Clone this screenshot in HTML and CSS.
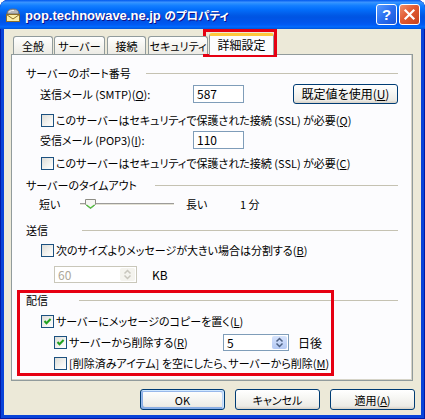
FILE: index.html
```html
<!DOCTYPE html>
<html lang="ja">
<head>
<meta charset="utf-8">
<title>pop.technowave.ne.jp のプロパティ</title>
<link rel="stylesheet" href="styles.css">
</head>
<body>
<div class="window">
  <div class="titlebar">
    <svg class="app-icon" width="16" height="16" viewBox="0 0 16 16">
      <path d="M2 7 Q2 2 8 2 Q14 2 14 7 Z" fill="#b8b8b8" stroke="#6d6d6d" stroke-width="1"/>
      <path d="M4 5 Q6 3 9 3.5" stroke="#eeeeee" stroke-width="1" fill="none"/>
      <rect x="1.5" y="7.5" width="13" height="7" fill="#fbeea8" stroke="#8a6d2a" stroke-width="1"/>
      <path d="M1.5 7.5 L8 12 L14.5 7.5" fill="none" stroke="#8a6d2a" stroke-width="1"/>
    </svg>
    <span class="title">pop.technowave.ne.jp <span class="title-ja">のプロパティ</span></span>
    <div class="title-buttons">
      <span class="tbtn help">?</span>
      <span class="tbtn close">
        <svg width="13" height="13" viewBox="0 0 13 13"><path d="M2.5 2.5 L10.5 10.5 M10.5 2.5 L2.5 10.5" stroke="#fff" stroke-width="2.2" stroke-linecap="square"/></svg>
      </span>
    </div>
  </div>

  <div class="client">
    <div class="tabs">
      <div class="tab tab-general">全般</div>
      <div class="tab tab-server">サーバー</div>
      <div class="tab tab-conn">接続</div>
      <div class="tab tab-sec">セキュリティ</div>
      <div class="tab tab-adv active">詳細設定</div>
    </div>

    <div class="panel">
      <div class="group-title">
        <span>サーバーのポート番号</span>
        <span class="rule rule-port"></span>
      </div>
      <div class="row row-input indent mt3">
        <span class="label">送信メール (SMTP)(<u>O</u>):</span>
        <span class="textbox">587</span>
        <span class="button btn-default-port">既定値を使用(<u>U</u>)</span>
      </div>
      <div class="row row-check indent-cb mt9">
        <span class="cb"></span>
        <span class="cb-label">このサーバーはセキュリティで保護された接続 (SSL) が必要(<u>Q</u>)</span>
      </div>
      <div class="row row-input indent mt3">
        <span class="label">受信メール (POP3)(<u>I</u>):</span>
        <span class="textbox">110</span>
      </div>
      <div class="row row-check indent-cb mt6">
        <span class="cb"></span>
        <span class="cb-label">このサーバーはセキュリティで保護された接続 (SSL) が必要(<u>C</u>)</span>
      </div>

      <div class="group-title mt7">
        <span>サーバーのタイムアウト</span>
        <span class="rule rule-timeout"></span>
      </div>
      <div class="row row-slider mt3">
        <span class="slider-label">短い</span>
        <span class="track">
          <svg class="thumb" width="11" height="10" viewBox="0 0 11 10">
            <path d="M0.5 0.5 H10.5 V5.5 L5.5 9.5 L0.5 5.5 Z" fill="#f6f6f3" stroke="#8c8c84"/>
            <path d="M1.5 6 L5.5 9 L9.5 6" fill="none" stroke="#4fc23b" stroke-width="1.2"/>
          </svg>
        </span>
        <span class="slider-long">長い</span>
        <span>1 分</span>
      </div>

      <div class="group-title mt10">
        <span>送信</span>
        <span class="rule rule-send"></span>
      </div>
      <div class="row row-check indent-cb mt5">
        <span class="cb"></span>
        <span class="cb-label">次のサイズよりメッセージが大きい場合は分割する(<u>B</u>)</span>
      </div>
      <div class="row row-spin indent2 mt8">
        <span class="spin spin-size disabled">
          <span class="spin-text">60</span>
          <span class="spin-btns">
            <svg width="9" height="11" viewBox="0 0 9 11"><path d="M1.5 4.5 L4.5 1.5 L7.5 4.5 M1.5 6.5 L4.5 9.5 L7.5 6.5" fill="none" stroke="#c8c6bd" stroke-width="1.5"/></svg>
          </span>
        </span>
        <span class="unit-kb">KB</span>
      </div>

      <div class="group-title mt9">
        <span>配信</span>
        <span class="rule rule-deliver"></span>
      </div>
      <div class="row row-check indent-cb mt6">
        <span class="cb checked"><svg width="11" height="11" viewBox="0 0 11 11"><path d="M2.5 5 L4.5 7.2 L8.6 3" fill="none" stroke="#21a121" stroke-width="2"/></svg></span>
        <span class="cb-label">サーバーにメッセージのコピーを置く(<u>L</u>)</span>
      </div>
      <div class="row row-spin indent2 mt5">
        <span class="cb-wrap">
          <span class="cb checked"><svg width="11" height="11" viewBox="0 0 11 11"><path d="M2.5 5 L4.5 7.2 L8.6 3" fill="none" stroke="#21a121" stroke-width="2"/></svg></span>
          <span class="cb-label">サーバーから削除する(<u>R</u>)</span>
        </span>
        <span class="spin spin-days">
          <span class="spin-text">5</span>
          <span class="spin-btns">
            <svg width="9" height="11" viewBox="0 0 9 11"><path d="M1.5 4.5 L4.5 1.5 L7.5 4.5 M1.5 6.5 L4.5 9.5 L7.5 6.5" fill="none" stroke="#4d6185" stroke-width="1.5"/></svg>
          </span>
        </span>
        <span class="unit-days">日後</span>
      </div>
      <div class="row row-check indent2 mt5">
        <span class="cb"></span>
        <span class="cb-label">[削除済みアイテム] を空にしたら、サーバーから削除(<u>M</u>)</span>
      </div>
    </div>

    <div class="footer">
      <span class="button dlg-btn default">OK</span>
      <span class="button dlg-btn">キャンセル</span>
      <span class="button dlg-btn">適用(<u>A</u>)</span>
    </div>
  </div>

  <div class="mark mark-tab"></div>
  <div class="mark mark-group"></div>
</div>
</body>
</html>
```

FILE: styles.css
```css
* { box-sizing: border-box; }
html, body { margin: 0; padding: 0; }
body {
  width: 425px;
  height: 419px;
  overflow: hidden;
  background: #ffffff;
  font-family: "Noto Sans CJK JP", "Liberation Sans", sans-serif;
  font-size: 11px;
  color: #000;
  font-feature-settings: "palt";
}
u { text-decoration: underline; text-underline-offset: 1px; }

.window {
  position: relative;
  width: 425px;
  height: 419px;
  background: #0843d9;
  border-radius: 8px 8px 0 0;
  padding: 0 4px 4px;
  display: flex;
  flex-direction: column;
  box-shadow: inset 1px 0 #0019a6, inset -1px 0 #0019a6, inset 0 -1px #0019a6;
}

/* title bar */
.titlebar {
  height: 29px;
  margin: 0 -4px;
  padding: 0 5px 0 5px;
  display: flex;
  align-items: center;
  border-radius: 8px 8px 0 0;
  background: linear-gradient(to bottom, #0058ee 0%, #3a93ff 8%, #288eff 12%, #127dff 20%, #036ffc 32%, #0262ee 44%, #0057e5 54%, #0054e3 60%, #0055eb 76%, #005bf5 86%, #026afe 92%, #0062ef 96%, #0052d6 100%);
}
.app-icon { flex: none; margin-top: 1px; }
.title {
  margin-left: 4px;
  color: #fff;
  font-family: "Liberation Sans", "Noto Sans CJK JP", sans-serif;
  font-weight: bold;
  font-size: 13px;
  text-shadow: 1px 1px #0f1089;
  flex: 1;
  white-space: nowrap;
}
.title-ja { font-family: "Noto Sans CJK JP", sans-serif; font-size: 11.5px; }
.title-buttons { display: flex; gap: 2px; }
.tbtn {
  width: 21px;
  height: 21px;
  border: 1px solid #fff;
  border-radius: 3px;
  display: flex;
  align-items: center;
  justify-content: center;
}
.help {
  background: linear-gradient(135deg, #5a9cff 0%, #2a6ff0 50%, #1a55d8 100%);
  color: #fff;
  font-family: "Liberation Sans", sans-serif;
  font-weight: bold;
  font-size: 15px;
}
.close {
  background: linear-gradient(135deg, #f0906c 0%, #e15a32 45%, #c7421c 100%);
}

/* client area */
.client {
  flex: 1;
  background: #ece9d8;
  padding: 4px 8px 0 7px;
  display: flex;
  flex-direction: column;
}

.tabs {
  height: 21px;
  display: flex;
  align-items: flex-end;
  padding-left: 2px;
  position: relative;
  z-index: 1;
}
.tab {
  height: 18px;
  border: 1px solid #919b9c;
  border-bottom: none;
  border-radius: 3px 3px 0 0;
  background: linear-gradient(to bottom, #ffffff 0%, #f4f3ee 60%, #ecebe5 100%);
  display: flex;
  align-items: center;
  justify-content: center;
  white-space: nowrap;
  line-height: 16px;
  padding-top: 1px;
}
.tab-general { width: 40px; }
.tab-server { width: 51px; margin-left: 1px; }
.tab-conn { width: 39px; margin-left: 2px; }
.tab-sec { width: 60px; margin-left: 2px; }
.tab-adv { width: 65px; margin-left: 1px; }
.tab.active {
  height: 22px;
  margin-bottom: -1px;
  background: #fcfcfe;
  border-top: 3px solid #ffc83c;
  padding-top: 0;
  padding-bottom: 2px;
  font-size: 12px;
}

.panel {
  height: 327px;
  border: 1px solid #919b9c;
  background: #fcfcfe;
  padding: 10px 14px 0 14px;
  display: flex;
  flex-direction: column;
  box-shadow: inset -1px -1px #d6d4c8;
}

.group-title {
  height: 16px;
  display: flex;
  align-items: center;
  justify-content: space-between;
  white-space: nowrap;
}
.rule { height: 1px; background: #c5c2b2; }
.rule-port { width: 252px; }
.rule-timeout { width: 243px; }
.rule-send { width: 316px; }
.rule-deliver { width: 319px; }

.row { display: flex; align-items: center; white-space: nowrap; }
.row-input { height: 20px; }
.row-check { height: 14px; }
.row-slider { height: 16px; padding-left: 13px; }
.row-spin { height: 18px; }
.indent { padding-left: 14px; }
.indent-cb { padding-left: 15px; }
.indent2 { padding-left: 28px; }

.mt3 { margin-top: 3px; }
.mt5 { margin-top: 5px; }
.mt6 { margin-top: 6px; }
.mt7 { margin-top: 7px; }
.mt8 { margin-top: 8px; }
.mt9 { margin-top: 9px; }
.mt10 { margin-top: 10px; }

.label { width: 153px; flex: none; }
.textbox {
  width: 51px;
  height: 18px;
  border: 1px solid #7f9db9;
  background: #fff;
  padding-left: 3px;
  line-height: 16px;
  font-size: 12px;
}

.button {
  border: 1px solid #003c74;
  border-radius: 3px;
  background: linear-gradient(to bottom, #ffffff 0%, #f7f7f4 40%, #ecebe6 85%, #d6d0c5 100%);
  display: flex;
  align-items: center;
  justify-content: center;
  line-height: 16px;
}
.btn-default-port { width: 105px; height: 20px; margin-left: 49px; font-size: 12px; }

.cb {
  width: 13px;
  height: 13px;
  flex: none;
  border: 1px solid #1c5180;
  background: linear-gradient(135deg, #dcdcd7 0%, #f4f4f1 60%, #ffffff 100%);
  display: flex;
}
.cb-label { margin-left: 2px; line-height: 14px; }
.cb-wrap { width: 169px; display: flex; align-items: center; flex: none; }

.slider-label { width: 41px; }
.track {
  position: relative;
  width: 94px;
  height: 3px;
  border-top: 1px solid #9d9c99;
  border-bottom: 1px solid #ffffff;
  background: #e3e1d5;
  margin-right: 12px;
}
.thumb { position: absolute; left: 5px; top: -5px; }
.slider-long { width: 54px; }

.spin {
  height: 17px;
  display: flex;
  border: 1px solid #7f9db9;
  background: #fff;
  font-size: 12px;
}
.spin-text { flex: 1; padding-left: 3px; line-height: 15px; }
.spin-btns {
  width: 15px;
  margin: 1px;
  border-radius: 2px;
  background: linear-gradient(to bottom, #d6e3fc, #b4c9f4);
  display: flex;
  align-items: center;
  justify-content: center;
}
.spin-size { width: 83px; }
.spin.disabled { border-color: #c9c7ba; color: #aca899; }
.spin.disabled .spin-btns { background: #f4f3ee; }
.spin-days { width: 66px; }
.unit-kb { margin-left: 15px; font-size: 12px; }
.unit-days { margin-left: 9px; font-size: 12px; }

.footer {
  margin-top: 8px;
  margin-right: -2px;
  display: flex;
  justify-content: flex-end;
  gap: 10px;
}
.dlg-btn { width: 85px; height: 21px; }
.dlg-btn.default {
  box-shadow: inset -1px 1px #cee7ff, inset 1px 2px #98b8ea, inset -2px 2px #bcd4f6, inset 1px -1px #89ade4, inset 2px -2px #89ade4;
}

/* red annotation boxes drawn over the dialog */
.mark {
  position: absolute;
  border: 3px solid #e60012;
  pointer-events: none;
}
.mark-tab { left: 203px; top: 29px; width: 74px; height: 28px; }
.mark-group { left: 17px; top: 290px; width: 317px; height: 86px; }
```
